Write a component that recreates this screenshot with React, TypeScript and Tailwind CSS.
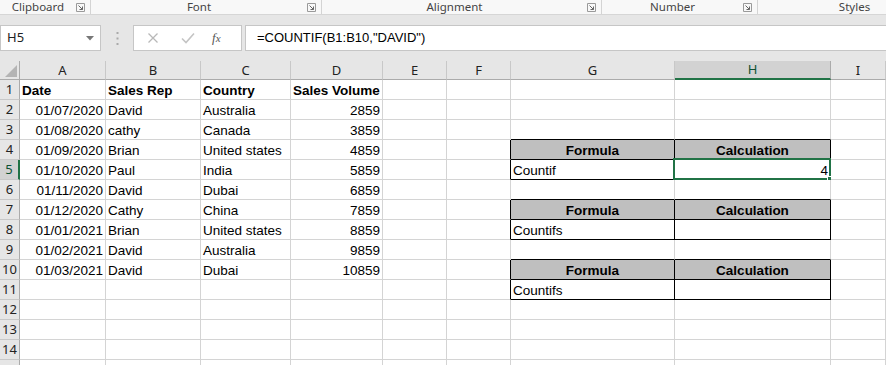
import React from "react";

const cols = ["A", "B", "C", "D", "E", "F", "G", "H", "I"];

type Row = (string | null)[];

const data: Row[] = [
  ["Date", "Sales Rep", "Country", "Sales Volume"],
  ["01/07/2020", "David", "Australia", "2859"],
  ["01/08/2020", "cathy", "Canada", "3859"],
  ["01/09/2020", "Brian", "United states", "4859"],
  ["01/10/2020", "Paul", "India", "5859"],
  ["01/11/2020", "David", "Dubai", "6859"],
  ["01/12/2020", "Cathy", "China", "7859"],
  ["01/01/2021", "Brian", "United states", "8859"],
  ["01/02/2021", "David", "Australia", "9859"],
  ["01/03/2021", "David", "Dubai", "10859"],
];

// rows (1-based) where a small bordered table sits in G:H
const tableHeadRows = [4, 7, 10];
const tableBodyRows = [5, 8, 11];
const tableBody: Record<number, string> = { 5: "Countif", 8: "Countifs", 11: "Countifs" };

const cellFont = { fontFamily: '"Liberation Sans", Arial, sans-serif' };
const uiFont = { fontFamily: '"Noto Sans", "Open Sans", sans-serif' };

function Launcher() {
  return (
    <svg width="9" height="9" viewBox="0 0 9 9" className="shrink-0">
      <path d="M0.5 8.5V0.5H8.5V8.5Z" fill="none" stroke="#9a9a9a" strokeWidth="1" />
      <path d="M2.5 2.5L6.5 6.5M6.5 3.5V6.5H3.5" fill="none" stroke="#666" strokeWidth="1" />
    </svg>
  );
}

function Group({ label, width, launcher = true }: { label: string; width: number; launcher?: boolean }) {
  return (
    <div className="flex h-full shrink-0 items-center border-r border-[#d4d4d4]" style={{ width }}>
      <span className="flex-1 text-center text-[11.5px] leading-[14px] text-[#444]">{label}</span>
      {launcher && (
        <span className="mr-[5px] flex">
          <Launcher />
        </span>
      )}
    </div>
  );
}

function cellClass(r: number, c: number) {
  // c: 0..8 => A..I
  const base = "relative flex h-[20px] items-end overflow-visible whitespace-nowrap border-b border-r px-[2px] pb-[2px] text-[13.5px] leading-none text-black";
  let right = "border-r-[#d4d4d4]";
  let bottom = "border-b-[#d4d4d4]";
  const inTable = tableHeadRows.includes(r) || tableBodyRows.includes(r);
  if (c === 5 && inTable) right = "border-r-black";
  if ((c === 6 || c === 7) && (inTable || tableHeadRows.includes(r + 1))) bottom = "border-b-black";
  if ((c === 6 || c === 7) && inTable) right = "border-r-black";
  let bg = "bg-white";
  if ((c === 6 || c === 7) && tableHeadRows.includes(r)) bg = "bg-[#bfbfbf]";
  return `${base} ${right} ${bottom} ${bg}`;
}

function Cell({ r, c }: { r: number; c: number }) {
  let text: string | null = null;
  let align = "justify-start";
  let bold = false;
  if (r <= 10 && c < 4) {
    text = data[r - 1][c];
    if (r === 1) bold = true;
    else if (c === 0 || c === 3) align = "justify-end";
  }
  if ((c === 6 || c === 7) && tableHeadRows.includes(r)) {
    text = c === 6 ? "Formula" : "Calculation";
    bold = true;
    align = "justify-center";
  }
  if (c === 6 && tableBodyRows.includes(r)) text = tableBody[r];
  if (c === 7 && r === 5) {
    text = "4";
    align = "justify-end";
  }
  return (
    <div className={`${cellClass(r, c)} ${align} ${bold ? "font-bold" : ""}`} style={cellFont}>
      {text}
      {c === 7 && r === 5 && (
        <div className="pointer-events-none absolute -left-[2px] -top-[2px] -right-[1px] -bottom-[1px] border-2 border-[#217346]">
          <div className="absolute -bottom-[4px] -right-[4px] h-[6px] w-[6px] border border-white bg-[#217346]" />
        </div>
      )}
    </div>
  );
}

export default function App() {
  const rows = Array.from({ length: 15 }, (_, i) => i + 1);
  return (
    <div className="h-[365px] w-[886px] overflow-hidden bg-white" style={uiFont}>
      {/* ribbon group labels */}
      <div className="flex h-[14px] items-center overflow-hidden bg-[#f8f8f8]">
        <Group label="Clipboard" width={91} />
        <Group label="Font" width={231} />
        <Group label="Alignment" width={280} />
        <Group label="Number" width={156} />
        <Group label="Styles" width={194} launcher={false} />
      </div>

      {/* formula bar */}
      <div className="flex h-[47px] items-center border-t border-[#d6d6d6] bg-[#e6e6e6]">
        <div className="flex h-[26px] w-[101px] shrink-0 items-center justify-between border border-[#c6c6c6] bg-white pl-[6px] pr-[6px]">
          <span className="text-[13px] text-[#222]">H5</span>
          <svg width="8" height="5" viewBox="0 0 8 5">
            <path d="M0 0H8L4 4.5Z" fill="#777" />
          </svg>
        </div>
        <div className="flex w-[32px] shrink-0 justify-center">
          <svg width="3" height="13" viewBox="0 0 3 13">
            <rect x="0.5" y="0" width="2" height="2" fill="#aaa" />
            <rect x="0.5" y="5.5" width="2" height="2" fill="#aaa" />
            <rect x="0.5" y="11" width="2" height="2" fill="#aaa" />
          </svg>
        </div>
        <div className="flex h-[26px] w-[109px] shrink-0 items-center border border-[#c6c6c6] bg-white">
          <svg width="12" height="12" viewBox="0 0 12 12" className="ml-[13px]">
            <path d="M1.5 1.5L10.5 10.5M10.5 1.5L1.5 10.5" stroke="#b8b8b8" strokeWidth="1.3" fill="none" />
          </svg>
          <svg width="14" height="12" viewBox="0 0 14 12" className="ml-[22px]">
            <path d="M1 6.5L5 10.5L13 1.5" stroke="#c4c4c4" strokeWidth="1.6" fill="none" />
          </svg>
          <span
            className="ml-[17px] text-[13px] italic text-[#555]"
            style={{ fontFamily: '"Liberation Serif", "Times New Roman", serif' }}
          >
            f<span className="text-[11px]">x</span>
          </span>
        </div>
        <div className="ml-[3px] flex h-[26px] flex-1 items-center border-y border-l border-[#c6c6c6] bg-white pl-[11px]">
          <span className="text-[13px] text-black" style={cellFont}>
            =COUNTIF(B1:B10,&quot;DAVID&quot;)
          </span>
        </div>
      </div>

      {/* sheet grid */}
      <div className="grid grid-cols-[20px_86px_95px_90px_92px_64px_64px_164px_156px_1fr]">
        {/* header row */}
        <div className="relative h-[19px] border-b border-r border-[#ababab] bg-[#e6e6e6]">
          <svg width="12" height="12" viewBox="0 0 12 12" className="absolute bottom-[2px] right-[2px]">
            <path d="M12 0V12H0Z" fill="#b4b4b4" />
          </svg>
        </div>
        {cols.map((c) => (
          <div
            key={c}
            className={`flex h-[19px] items-center justify-center border-r text-[13px] leading-none ${
              c === "H"
                ? "border-b-2 border-b-[#217346] border-r-[#ababab] bg-[#d2d2d2] text-[#0d5132]"
                : "border-b border-b-[#ababab] border-r-[#c8c8c8] bg-[#e6e6e6] text-[#222]"
            }`}
          >
            {c}
          </div>
        ))}

        {rows.map((r) => (
          <React.Fragment key={r}>
            <div
              className={`flex h-[20px] items-center justify-center border-b border-[#c8c8c8] text-[13px] leading-none ${
                r === 5
                  ? "border-r-2 border-r-[#217346] bg-[#d2d2d2] text-[#0d5132]"
                  : "border-r border-r-[#ababab] bg-[#e6e6e6] text-[#222]"
              }`}
            >
              {r < 15 ? r : null}
            </div>
            {cols.map((_, c) => (
              <Cell key={c} r={r} c={c} />
            ))}
          </React.Fragment>
        ))}
      </div>
    </div>
  );
}
